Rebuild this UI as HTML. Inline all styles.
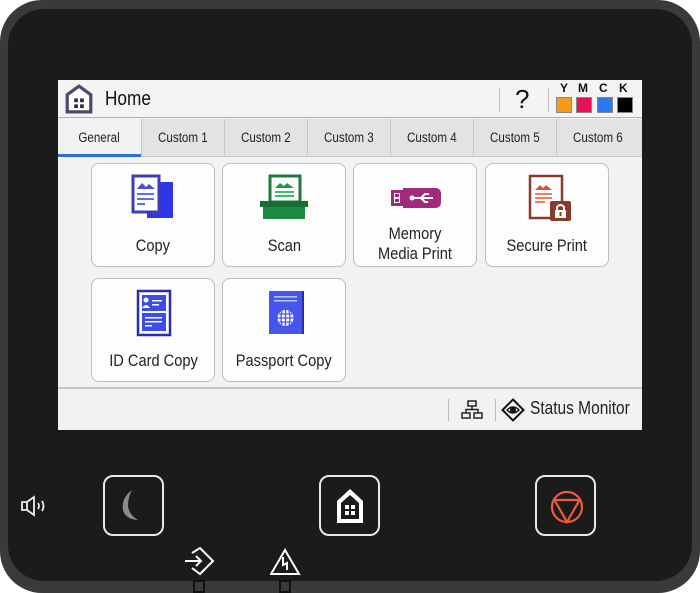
<!DOCTYPE html>
<html><head><meta charset="utf-8"><style>
*{margin:0;padding:0;box-sizing:border-box}
body{width:700px;height:593px;background:#fff;position:relative;overflow:hidden;font-family:"Liberation Sans",sans-serif}
.dev{position:absolute;left:0;top:0;width:700px;height:593px;background:#3a3a3a;border-radius:42px}
.in{position:absolute;left:8px;top:9px;width:684px;height:572px;background:#1b1b1b;border-radius:36px}
.scr{position:absolute;left:58px;top:80px;width:584px;height:350px;background:#f2f2f2;overflow:hidden}
.hdr{position:absolute;left:0;top:0;width:584px;height:38px;background:#f4f4f4;border-bottom:1px solid #b0b0b0}
.tabs{position:absolute;left:0;top:39px;width:584px;height:38px;background:#e3e3e3;border-bottom:1px solid #c8c8c8}
.tab{position:absolute;top:0;height:37px;width:83px;font-size:13.5px;color:#222;text-align:center;line-height:38px;border-left:1px solid #c8c8c8;white-space:nowrap}
.tab span,.c{display:inline-block;transform:scaleX(0.86);white-space:nowrap}
.tile{position:absolute;width:124px;height:104px;background:#fdfdfd;border:1px solid #bdbdbd;border-radius:8px;text-align:center;font-size:17px;color:#222}
.tile .l{position:absolute;left:-20px;right:-20px;bottom:10px;line-height:20px}
.tile svg{position:absolute;left:37px;top:10px}
.ft{position:absolute;left:0;top:307px;width:584px;height:43px;border-top:2px solid #c4c4c4;background:#f2f2f2}
.btn{position:absolute;top:475px;width:61px;height:61px;border:2px solid #e8e8e8;border-radius:10px}
</style></head><body>
<div class="dev"><div class="in"></div></div>
<div class="scr">
 <div class="hdr">
  <svg style="position:absolute;left:7px;top:4px" width="28" height="30" viewBox="0 0 26 28"><path d="M2 10 L13 2 L24 10 V26 H2Z" fill="#fff" stroke="#4a4a6e" stroke-width="3"/><rect x="8.5" y="13.5" width="3.5" height="3.5" fill="#2c2c4a"/><rect x="14" y="13.5" width="3.5" height="3.5" fill="#2c2c4a"/><rect x="8.5" y="19" width="3.5" height="3.5" fill="#2c2c4a"/><rect x="14" y="19" width="3.5" height="3.5" fill="#2c2c4a"/></svg>
  <div style="position:absolute;left:47px;top:8px;font-size:20px;color:#111"><span class="c" style="transform-origin:left">Home</span></div>
  <div style="position:absolute;left:441px;top:8px;width:1px;height:24px;background:#bbb"></div>
  <div style="position:absolute;left:457px;top:4px;font-size:26px;color:#111">?</div>
  <div style="position:absolute;left:490px;top:8px;width:1px;height:24px;background:#bbb"></div>
  <div style="position:absolute;left:499px;top:1px;font-size:12px;font-weight:bold;color:#111;width:80px">
   <span style="position:absolute;left:3px">Y</span><span style="position:absolute;left:21px">M</span><span style="position:absolute;left:42px">C</span><span style="position:absolute;left:62px">K</span></div>
  <div style="position:absolute;left:498px;top:17px;width:16px;height:16px;background:#f59a1b;border:1px solid #888"></div>
  <div style="position:absolute;left:518px;top:17px;width:16px;height:16px;background:#e5105a;border:1px solid #888"></div>
  <div style="position:absolute;left:539px;top:17px;width:16px;height:16px;background:#2b7af0;border:1px solid #888"></div>
  <div style="position:absolute;left:559px;top:17px;width:16px;height:16px;background:#000;border:1px solid #888"></div>
 </div>
 <div class="tabs">
  <div class="tab" style="left:0;border:0;background:#f2f2f2;border-bottom:3px solid #2b6fd6;height:38px;line-height:37px"><span>General</span></div>
  <div class="tab" style="left:83px"><span>Custom 1</span></div>
  <div class="tab" style="left:166px"><span>Custom 2</span></div>
  <div class="tab" style="left:249px"><span>Custom 3</span></div>
  <div class="tab" style="left:332px"><span>Custom 4</span></div>
  <div class="tab" style="left:415px"><span>Custom 5</span></div>
  <div class="tab" style="left:498px"><span>Custom 6</span></div>
 </div>
 <div class="tile" style="left:33px;top:83px"><svg width="50" height="50" viewBox="0 0 50 50"><rect x="18" y="8" width="26" height="36" fill="#2f36e8"/><rect x="4" y="2" width="26" height="36" fill="#fff" stroke="#3d3db8" stroke-width="3"/><path d="M8 15 L13 9 L17 13 L20 10 L26 15Z" fill="#4b4be0"/><rect x="8" y="19" width="17" height="2" fill="#5a6cf0"/><rect x="8" y="24" width="17" height="2" fill="#5a6cf0"/><rect x="8" y="29" width="8" height="2" fill="#5a6cf0"/></svg><div class="l"><span class="c">Copy</span></div></div>
 <div class="tile" style="left:164px;top:83px"><svg width="50" height="50" viewBox="0 0 50 50"><rect x="10" y="2" width="30" height="26" fill="#fff" stroke="#1c7a3c" stroke-width="3"/><path d="M15 14 L20 9 L24 12 L27 9 L34 14Z" fill="#1c9a4c"/><rect x="15" y="17" width="19" height="2" fill="#3ac06a"/><rect x="15" y="21" width="19" height="2" fill="#3ac06a"/><rect x="0" y="27" width="48" height="6" fill="#176e35"/><rect x="3" y="33" width="42" height="12" fill="#1f8a45"/></svg><div class="l"><span class="c">Scan</span></div></div>
 <div class="tile" style="left:295px;top:83px"><svg width="50" height="50" viewBox="0 0 50 50"><rect x="0" y="16" width="12" height="16" fill="#a22a7a"/><rect x="3" y="19" width="6" height="10" fill="#fff"/><rect x="4" y="20" width="4" height="3" fill="#a22a7a"/><rect x="4" y="25" width="4" height="3" fill="#a22a7a"/><path d="M12 14 H44 Q50 14 50 20 V28 Q50 34 44 34 H12Z" fill="#a22a7a"/><path d="M20 24 H42 M30 24 L34 20 H38 M30 24 L34 28 H37" stroke="#fff" stroke-width="2" fill="none"/><circle cx="21" cy="24" r="2.5" fill="#fff"/></svg><div class="l" style="bottom:2px"><span class="c">Memory<br>Media Print</span></div></div>
 <div class="tile" style="left:427px;top:83px"><svg width="50" height="50" viewBox="0 0 50 50"><rect x="7" y="2" width="32" height="42" fill="#fff" stroke="#8a3a2a" stroke-width="2.5"/><path d="M12 16 L17 11 L20 14 L23 11 L29 16Z" fill="#e8502a"/><rect x="12" y="19" width="17" height="2" fill="#f08060"/><rect x="12" y="23" width="17" height="2" fill="#f08060"/><rect x="12" y="27" width="10" height="2" fill="#f08060"/><rect x="27" y="27" width="21" height="20" rx="2" fill="#8a3a2a"/><path d="M34 36 V33 Q37.5 29 41 33 V36" stroke="#fff" stroke-width="2" fill="none"/><rect x="32" y="36" width="11" height="8" fill="#fff"/><rect x="36.5" y="38" width="2" height="4" fill="#8a3a2a"/></svg><div class="l"><span class="c">Secure Print</span></div></div>
 <div class="tile" style="left:33px;top:198px"><svg width="50" height="50" viewBox="0 0 50 50"><rect x="9" y="2" width="32" height="44" fill="#fff" stroke="#2c2cb0" stroke-width="2.5"/><rect x="13" y="6" width="24" height="16" fill="#3c4ce8"/><circle cx="17" cy="11" r="2.5" fill="#fff"/><path d="M13 19 Q17 13 21 19Z" fill="#fff"/><rect x="23" y="11" width="10" height="1.5" fill="#fff"/><rect x="23" y="15" width="7" height="1.5" fill="#fff"/><rect x="13" y="24" width="24" height="18" fill="#3c4ce8"/><rect x="16" y="28" width="17" height="1.5" fill="#fff"/><rect x="16" y="32" width="17" height="1.5" fill="#fff"/><rect x="16" y="36" width="7" height="1.5" fill="#fff"/></svg><div class="l"><span class="c">ID Card Copy</span></div></div>
 <div class="tile" style="left:164px;top:198px"><svg width="50" height="50" viewBox="0 0 50 50"><rect x="10" y="2" width="34" height="43" fill="#2e2ea0"/><rect x="9" y="2" width="33" height="43" fill="#4656ec"/><rect x="14" y="7" width="23" height="1.6" fill="#b8c0ff"/><rect x="14" y="11" width="23" height="1.6" fill="#b8c0ff"/><circle cx="25.5" cy="29" r="8" fill="#fff"/><path d="M17.5 29 H33.5 M25.5 21 V37 M19 25 H32 M19 33 H32 M22 22 Q20 29 22 36 M29 22 Q31 29 29 36" stroke="#4656ec" stroke-width="1.3" fill="none"/></svg><div class="l"><span class="c">Passport Copy</span></div></div>
 <div class="ft">
  <div style="position:absolute;left:390px;top:10px;width:1px;height:22px;background:#bbb"></div>
  <svg style="position:absolute;left:403px;top:10px" width="22" height="22" viewBox="0 0 22 22" fill="none" stroke="#222" stroke-width="1.5"><rect x="7" y="2" width="8" height="5"/><rect x="1" y="14" width="8" height="5"/><rect x="13" y="14" width="8" height="5"/><path d="M11 7 V10.5 M5 14 V10.5 H17 V14"/></svg>
  <div style="position:absolute;left:437px;top:10px;width:1px;height:22px;background:#bbb"></div>
  <svg style="position:absolute;left:443px;top:9px" width="24" height="24" viewBox="0 0 24 24" fill="none" stroke="#111" stroke-width="2"><path d="M12 1.5 L22.5 12 L12 22.5 L1.5 12Z"/><path d="M6 12 Q12 6 18 12 Q12 18 6 12Z" stroke-width="1.5"/><circle cx="12" cy="12" r="2" fill="#111"/></svg>
  <div style="position:absolute;left:472px;top:9px;font-size:18px;color:#222;white-space:nowrap;width:200px"><span class="c" style="transform-origin:left">Status Monitor</span></div>
 </div>
</div>
<svg style="position:absolute;left:20px;top:495px" width="32" height="22" viewBox="0 0 32 22" fill="none" stroke="#eee" stroke-width="1.8"><path d="M2 7 H7 L14 2 V20 L7 15 H2Z M7 7 V15"/><path d="M18 8 Q20 11 18 14 M22 6 Q25 11 22 16"/></svg>
<div class="btn" style="left:103px"><svg style="position:absolute;left:14px;top:11px" width="30" height="36" viewBox="0 0 30 36"><path d="M13 2 Q2 10 4 22 Q6 31 19 32 Q10 27 9 18 Q9 9 13 2Z" fill="#8a8a8a"/></svg></div>
<div class="btn" style="left:319px"><svg style="position:absolute;left:13px;top:10px" width="32" height="38" viewBox="0 0 32 38"><path d="M3 14 L16 2 L29 14 V36 H3Z" fill="#fff"/><path d="M7 16 L16 8 L25 16 V32 H7Z" fill="#1b1b1b"/><rect x="11" y="18" width="4" height="4" fill="#fff"/><rect x="17" y="18" width="4" height="4" fill="#fff"/><rect x="11" y="24" width="4" height="4" fill="#fff"/><rect x="17" y="24" width="4" height="4" fill="#fff"/></svg></div>
<div class="btn" style="left:535px"><svg style="position:absolute;left:12px;top:12px" width="36" height="36" viewBox="0 0 36 36" fill="none" stroke="#f05a3a" stroke-width="2.2"><circle cx="18" cy="18" r="15"/><path d="M5.5 11 H30.5 L18 33Z"/></svg></div>
<svg style="position:absolute;left:183px;top:547px" width="32" height="32" viewBox="0 0 32 32" fill="none" stroke="#fff" stroke-width="2"><path d="M2 14 H18 M13 9 L18 14 L13 19"/><path d="M9 6 L17 1 L30 14 L17 27 L9 21"/></svg>
<svg style="position:absolute;left:270px;top:548px" width="32" height="28" viewBox="0 0 32 28" fill="none" stroke="#fff" stroke-width="2"><path d="M15 2 L29 26 H1Z"/><path d="M13 9 V17 L17 15 V22"/></svg>
<div style="position:absolute;left:193px;top:580px;width:12px;height:13px;border:2px solid #111;background:#3a3a3a"></div>
<div style="position:absolute;left:279px;top:580px;width:12px;height:13px;border:2px solid #111;background:#3a3a3a"></div>
</body></html>
